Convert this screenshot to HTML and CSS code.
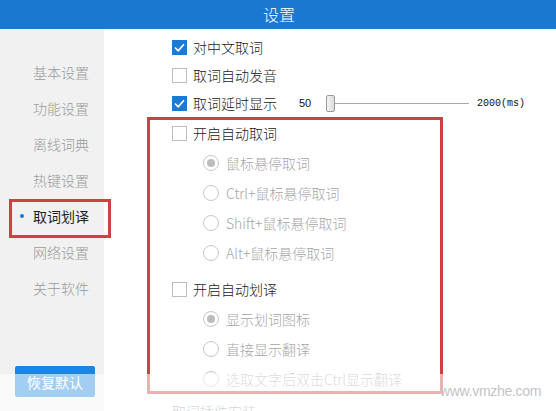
FILE: index.html
```html
<!DOCTYPE html>
<html>
<head>
<meta charset="utf-8">
<link rel="stylesheet" href="styles.css">
</head>
<body>
<div class="app">
  <div class="header">设置</div>
  <div class="body">
    <div class="sidebar">
      <div class="nav">基本设置</div>
      <div class="nav">功能设置</div>
      <div class="nav">离线词典</div>
      <div class="nav">热键设置</div>
      <div class="nav active">取词划译</div>
      <div class="nav">网络设置</div>
      <div class="nav">关于软件</div>
      <button class="restore">恢复默认</button>
    </div>
    <div class="main">
      <div class="row short"><span class="cb checked"><svg viewBox="0 0 15 15" width="15" height="15"><path d="M3 7.5 L6.2 10.8 L12 4.2" fill="none" stroke="#fff" stroke-width="1.6"/></svg></span><span class="lbl">对中文取词</span></div>
      <div class="row short"><span class="cb"></span><span class="lbl">取词自动发音</span></div>
      <div class="row short"><span class="cb checked"><svg viewBox="0 0 15 15" width="15" height="15"><path d="M3 7.5 L6.2 10.8 L12 4.2" fill="none" stroke="#fff" stroke-width="1.6"/></svg></span><span class="lbl">取词延时显示</span>
        <span class="slider">
          <span class="min">50</span>
          <span class="thumb"></span>
          <span class="track"></span>
          <span class="max">2000(ms)</span>
        </span>
      </div>
      <div class="row group-top"><span class="cb"></span><span class="lbl">开启自动取词</span></div>
      <div class="row radio-row"><span class="rd on"></span><span class="rlbl">鼠标悬停取词</span></div>
      <div class="row radio-row"><span class="rd"></span><span class="rlbl">Ctrl+鼠标悬停取词</span></div>
      <div class="row radio-row"><span class="rd"></span><span class="rlbl">Shift+鼠标悬停取词</span></div>
      <div class="row radio-row"><span class="rd"></span><span class="rlbl">Alt+鼠标悬停取词</span></div>
      <div class="row gap"><span class="cb"></span><span class="lbl">开启自动划译</span></div>
      <div class="row radio-row"><span class="rd on"></span><span class="rlbl">显示划词图标</span></div>
      <div class="row radio-row"><span class="rd"></span><span class="rlbl">直接显示翻译</span></div>
      <div class="row radio-row"><span class="rd"></span><span class="rlbl">选取文字后双击Ctrl显示翻译</span></div>
      <div class="row last"><span class="lbl plain">取词插件安装</span></div>
    </div>
  </div>
  <div class="mark mark-nav"></div>
  <div class="mark mark-group"></div>
  <div class="fade"></div>
  <div class="watermark">www.vmzhe.com</div>
</div>
</body>
</html>
```
FILE: styles.css
```css
* { box-sizing: border-box; }
html, body { margin: 0; padding: 0; }
body {
  width: 556px;
  height: 411px;
  overflow: hidden;
  font-family: "Noto Sans CJK SC", "Microsoft YaHei", sans-serif;
  background: #fff;
}
.app {
  position: relative;
  width: 556px;
  height: 411px;
  display: flex;
  flex-direction: column;
  overflow: hidden;
}
.header {
  height: 29px;
  flex-shrink: 0;
  background: #1a78d0;
  color: #fff;
  font-size: 16px;
  font-weight: 300;
  line-height: 29px;
  text-align: center;
  padding-left: 2px;
}
.body {
  flex: 1;
  min-height: 0;
  overflow: hidden;
  display: flex;
}
.sidebar {
  width: 104px;
  background: #f1f1f1;
  display: flex;
  flex-direction: column;
  padding-top: 25px;
}
.nav {
  position: relative;
  height: 36px;
  line-height: 36px;
  padding-left: 33px;
  font-size: 14px;
  font-weight: 300;
  color: #9a9a9a;
}
.nav.active { color: #1e1e1e; font-weight: 400; }
.nav.active::before {
  content: "";
  position: absolute;
  left: 20px;
  top: 16px;
  width: 4px;
  height: 4px;
  border-radius: 50%;
  background: #1a78d0;
}
.restore {
  margin-top: auto;
  margin-bottom: 14px;
  margin-left: 15px;
  width: 80px;
  height: 31px;
  border: none;
  border-radius: 2px;
  background: #1a86e0;
  color: #fff;
  font-family: "Noto Sans CJK SC", sans-serif;
  font-size: 14px;
  padding: 0;
}
.main {
  flex: 1;
  min-height: 0;
  overflow: hidden;
  padding-top: 4px;
  padding-left: 68px;
  display: flex;
  flex-direction: column;
}
.row {
  display: flex;
  align-items: center;
  height: 30px;
  flex-shrink: 0;
}
.row.short { height: 28px; }
.row.group-top { margin-top: 1px; }
.row.gap { margin-top: 6px; }
.row.last { margin-top: 2px; }
.radio-row { padding-left: 31px; }
.cb {
  width: 15px;
  height: 15px;
  border: 1px solid #bdbdbd;
  background: #fff;
  display: inline-block;
  flex-shrink: 0;
}
.cb.checked {
  background: #1a7ad4;
  border-color: #1a7ad4;
  position: relative;
}
.cb.checked svg { position: absolute; left: -1px; top: -1px; }
.lbl {
  margin-left: 6px;
  font-size: 14px;
  font-weight: 300;
  color: #222;
}
.lbl.plain { margin-left: 0; color: #999; }
.rd {
  width: 16px;
  height: 16px;
  border: 1px solid #c8c8c8;
  border-radius: 50%;
  background: #fff;
  flex-shrink: 0;
  display: flex;
  align-items: center;
  justify-content: center;
}
.rd.on::after {
  content: "";
  width: 8px;
  height: 8px;
  border-radius: 50%;
  background: #bcbcbc;
}
.rlbl {
  margin-left: 7px;
  font-size: 14px;
  font-weight: 300;
  color: #a6a6a6;
}
.slider {
  display: flex;
  align-items: center;
  margin-left: 22px;
}
.min {
  font-family: "Liberation Sans", Arial, sans-serif;
  font-size: 11px;
  color: #111;
  width: 27px;
}
.thumb {
  width: 9px;
  height: 17px;
  border: 1px solid #9a9a9a;
  border-radius: 2px;
  background: linear-gradient(to right, #f4f4f4, #dcdcdc);
}
.track {
  width: 134px;
  height: 1px;
  background: #a8a8a8;
}
.max {
  margin-left: 8px;
  font-family: "Liberation Mono", monospace;
  font-size: 10px;
  color: #111;
}
.mark {
  position: absolute;
  border: 3px solid #c9433f;
}
.mark-nav {
  left: 9px;
  top: 199px;
  width: 102px;
  height: 39px;
}
.mark-group {
  left: 147px;
  top: 117px;
  width: 296px;
  height: 277px;
}
.fade {
  position: absolute;
  left: 0;
  right: 0;
  top: 374px;
  bottom: 0;
  background: rgba(255, 255, 255, 0.6);
}
.watermark {
  position: absolute;
  left: 440px;
  top: 383px;
  font-family: "Liberation Sans", Arial, sans-serif;
  font-size: 14px;
  color: #c4c4c4;
  letter-spacing: -0.3px;
}
```
